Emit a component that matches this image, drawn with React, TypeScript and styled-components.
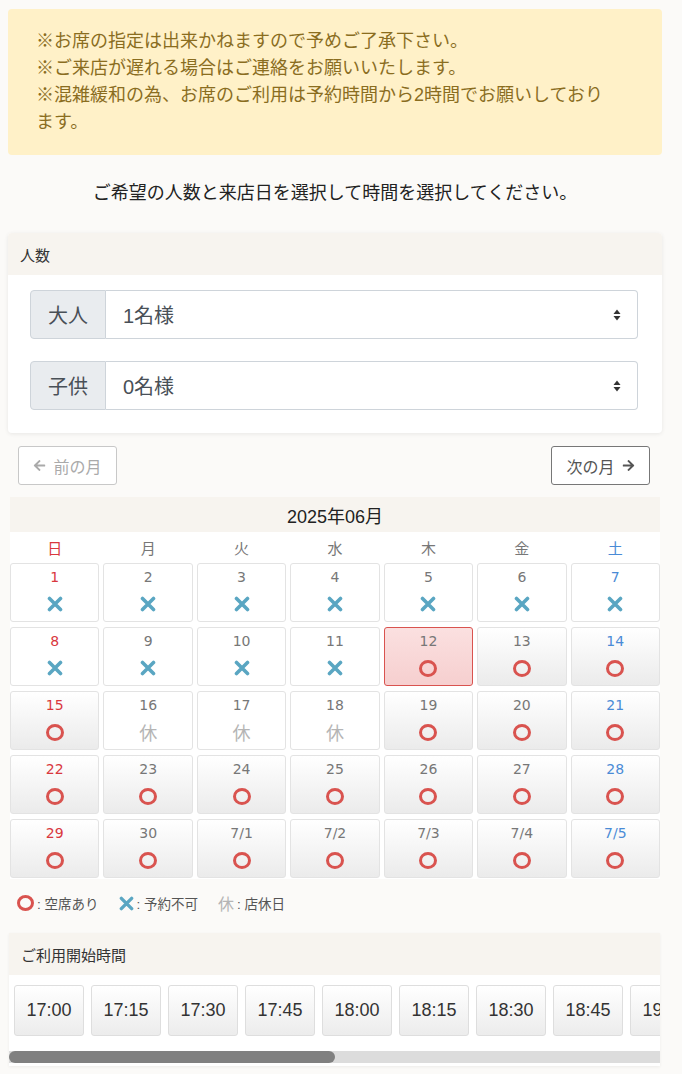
import styled, { createGlobalStyle } from 'styled-components';
import { FaArrowLeft, FaArrowRight } from 'react-icons/fa';

const GlobalStyle = createGlobalStyle`
    body {
        margin: 0;
        background: #fbfaf8;
        font-family: "Liberation Sans", "Noto Sans CJK JP", sans-serif;
        color: #333;
    }
    * { box-sizing: border-box; }
`

type Mark = 'ok' | 'ng' | 'off';
type Day = { label: string; mark: Mark; selected?: boolean };

const build = (): Day[] => {
    const days: Day[] = [];
    for (let d = 1; d <= 30; d++) {
        let mark: Mark = 'ok';
        if (d <= 11) mark = 'ng';
        if (d >= 16 && d <= 18) mark = 'off';
        days.push({ label: String(d), mark, selected: d === 12 });
    }
    for (let d = 1; d <= 5; d++) days.push({ label: `7/${d}`, mark: 'ok' });
    return days;
};

const week = ['日', '月', '火', '水', '木', '金', '土'];
const times: string[] = [];
for (let h = 17; h <= 21; h++) {
    for (const m of ['00', '15', '30', '45']) {
        if (h === 21 && m !== '00') break;
        times.push(`${h}:${m}`);
    }
}

function Select({ label, value }: { label: string; value: string }) {
    return (
        <SelectGroup>
            <Addon>{label}</Addon>
            <SelectBox>
                <span>{value}</span>
                <svg width="8" height="12" viewBox="0 0 8 12">
                    <path d="M4 0.5 L7.5 5 H0.5 Z" fill="#333" />
                    <path d="M4 11.5 L7.5 7 H0.5 Z" fill="#333" />
                </svg>
            </SelectBox>
        </SelectGroup>
    );
}

function CrossIcon({ size = 16 }: { size?: number }) {
    return (
        <svg width={size} height={size} viewBox="0 0 16 16">
            <path d="M2.5 2.5 L13.5 13.5 M13.5 2.5 L2.5 13.5" stroke="#5aa6c2" strokeWidth="3.6" strokeLinecap="round" />
        </svg>
    );
}

function MarkIcon({ mark }: { mark: Mark }) {
    if (mark === 'ok') return <Ring />;
    if (mark === 'ng') return <Cross><CrossIcon /></Cross>;
    return <Rest>休</Rest>;
}

export default function App() {
    const days = build();
    return (
        <Page>
            <GlobalStyle />
            <Notice>
                ※お席の指定は出来かねますので予めご了承下さい。<br />
                ※ご来店が遅れる場合はご連絡をお願いいたします。<br />
                ※混雑緩和の為、お席のご利用は予約時間から2時間でお願いしております。
            </Notice>
            <Lead>ご希望の人数と来店日を選択して時間を選択してください。</Lead>
            <Card>
                <CardHead>人数</CardHead>
                <CardBody>
                    <Select label="大人" value="1名様" />
                    <Select label="子供" value="0名様" />
                </CardBody>
            </Card>
            <MonthNav>
                <NavButton $disabled><FaArrowLeft size={13} />前の月</NavButton>
                <NavButton>次の月<FaArrowRight size={13} /></NavButton>
            </MonthNav>
            <Calendar>
                <CalHead>2025年06月</CalHead>
                <Grid>
                    {week.map((w, i) => <Dow key={w} $col={i}>{w}</Dow>)}
                    {days.map((d, i) => (
                        <Cell key={d.label} $mark={d.mark} $selected={!!d.selected}>
                            <Num $col={i % 7}>{d.label}</Num>
                            <MarkIcon mark={d.mark} />
                        </Cell>
                    ))}
                </Grid>
            </Calendar>
            <Legend>
                <LegendItem><SmallRing />: 空席あり</LegendItem>
                <LegendItem><CrossIcon size={15} />: 予約不可</LegendItem>
                <LegendItem><Rest $small>休</Rest>: 店休日</LegendItem>
            </Legend>
            <TimeCard>
                <CardHead>ご利用開始時間</CardHead>
                <TimeScroller>
                    {times.map((t) => <TimeButton key={t}>{t}</TimeButton>)}
                </TimeScroller>
                <ScrollTrack>
                    <ScrollThumb style={{ width: '50%' }} />
                </ScrollTrack>
            </TimeCard>
        </Page>
    );
}

const Page = styled.div`
    padding: 9px 20px 8px 8px;
`

const Notice = styled.div`
    background: #fff1c8;
    color: #8a6d1f;
    border-radius: 4px;
    padding: 19px 46px 19px 28px;
    font-size: 18px;
    line-height: 27px;
`

const Lead = styled.p`
    margin: 25px 0 27px;
    text-align: center;
    font-size: 18px;
    line-height: 26px;
    color: #222;
`

const Card = styled.div`
    background: #fff;
    border-radius: 4px;
    box-shadow: 0 1px 4px rgba(0, 0, 0, 0.08);
    overflow: hidden;
`

const CardHead = styled.div`
    background: #f7f4ef;
    height: 42px;
    display: flex;
    align-items: center;
    padding: 0 12px;
    font-size: 15px;
    color: #333;
`

const CardBody = styled.div`
    padding: 15px 24px 23px 22px;
    display: flex;
    flex-direction: column;
    gap: 22px;
`

const SelectGroup = styled.div`
    display: flex;
    height: 49px;
`

const Addon = styled.div`
    width: 76px;
    display: flex;
    align-items: center;
    justify-content: center;
    background: #e9ecef;
    border: 1px solid #ced4da;
    border-radius: 4px 0 0 4px;
    font-size: 20px;
    color: #495057;
`

const SelectBox = styled.div`
    flex: 1;
    display: flex;
    align-items: center;
    justify-content: space-between;
    border: 1px solid #ced4da;
    border-left: none;
    border-radius: 0 4px 4px 0;
    padding: 0 16px 0 17px;
    font-size: 20px;
    color: #495057;
`

const MonthNav = styled.div`
    display: flex;
    justify-content: space-between;
    padding: 0 12px 0 10px;
    margin-top: 13px;
`

const NavButton = styled.div<{ $disabled?: boolean }>`
    width: 99px;
    height: 39px;
    display: flex;
    align-items: center;
    justify-content: center;
    gap: 7px;
    border: 1px solid ${p => p.$disabled ? '#c8c8c8' : '#777'};
    border-radius: 3px;
    font-size: 16px;
    color: ${p => p.$disabled ? '#aaa' : '#555'};
    background: #fff;
`

const Calendar = styled.div`
    margin: 12px 2px 0;
    background: #fff;
`

const CalHead = styled.div`
    background: #f7f4ef;
    height: 35px;
    display: flex;
    align-items: center;
    justify-content: center;
    font-size: 18px;
    color: #222;
`

const dayColor = (col: number) => col === 0 ? '#d9383e' : col === 6 ? '#4a8bd6' : '#777';

const Grid = styled.div`
    display: grid;
    grid-template-columns: repeat(7, 1fr);
    grid-template-rows: 26px;
    grid-auto-rows: 59px;
    row-gap: 5px;
    column-gap: 4px;
    padding-bottom: 1px;
`

const Dow = styled.div<{ $col: number }>`
    display: flex;
    align-items: center;
    justify-content: center;
    padding-top: 4px;
    font-size: 15px;
    color: ${p => dayColor(p.$col)};
`

const Cell = styled.div<{ $mark: Mark; $selected: boolean }>`
    border-radius: 3px;
    border: ${p => p.$selected ? '1.5px solid #d9534f' : '1px solid #e3e3e3'};
    background: ${p => p.$selected
        ? 'linear-gradient(#fbe0e0, #f6cfcf)'
        : p.$mark === 'ok' ? 'linear-gradient(#fff, #ebebeb)' : '#fff'};
    display: flex;
    flex-direction: column;
    align-items: center;
    padding-top: 5px;
    gap: 7px;
`

const Num = styled.div<{ $col: number }>`
    font-family: "DejaVu Sans", sans-serif;
    font-size: 14px;
    line-height: 17px;
    color: ${p => dayColor(p.$col)};
`

const Ring = styled.div`
    width: 18px;
    height: 17px;
    border: 3px solid #d9534f;
    border-radius: 50%;
    margin-top: 3px;
`

const SmallRing = styled(Ring)`
    width: 17px;
    height: 16px;
    margin-top: 0;
`

const Cross = styled.div`
    display: flex;
    margin-top: 3px;
`

const Rest = styled.div<{ $small?: boolean }>`
    color: #b5b5b5;
    font-size: ${p => p.$small ? '16px' : '18px'};
    line-height: 20px;
    font-family: "Noto Sans CJK JP", sans-serif;
    margin-top: ${p => p.$small ? '0' : '1px'};
`

const Legend = styled.div`
    display: flex;
    gap: 20px;
    padding: 14px 0 0 9px;
    font-size: 13.5px;
    color: #555;
    height: 42px;
`

const LegendItem = styled.div`
    display: flex;
    align-items: center;
    gap: 3px;
    height: 20px;
`

const TimeCard = styled.div`
    margin: 12px 2px 0 1px;
    background: #fff;
    box-shadow: 0 1px 3px rgba(0, 0, 0, 0.06);
    overflow: hidden;
    padding-bottom: 3px;
`

const TimeScroller = styled.div`
    display: flex;
    gap: 7px;
    padding: 10px 5px 15px;
    overflow: hidden;
`

const TimeButton = styled.div`
    flex: 0 0 70px;
    height: 51px;
    display: flex;
    align-items: center;
    justify-content: center;
    border: 1px solid #dedede;
    border-radius: 3px;
    background: linear-gradient(#fff, #ececec);
    font-size: 18px;
    color: #333;
`

const ScrollTrack = styled.div`
    height: 12px;
    background: #dcdcdc;
`

const ScrollThumb = styled.div`
    height: 100%;
    background: #808080;
    border-radius: 6px;
`
